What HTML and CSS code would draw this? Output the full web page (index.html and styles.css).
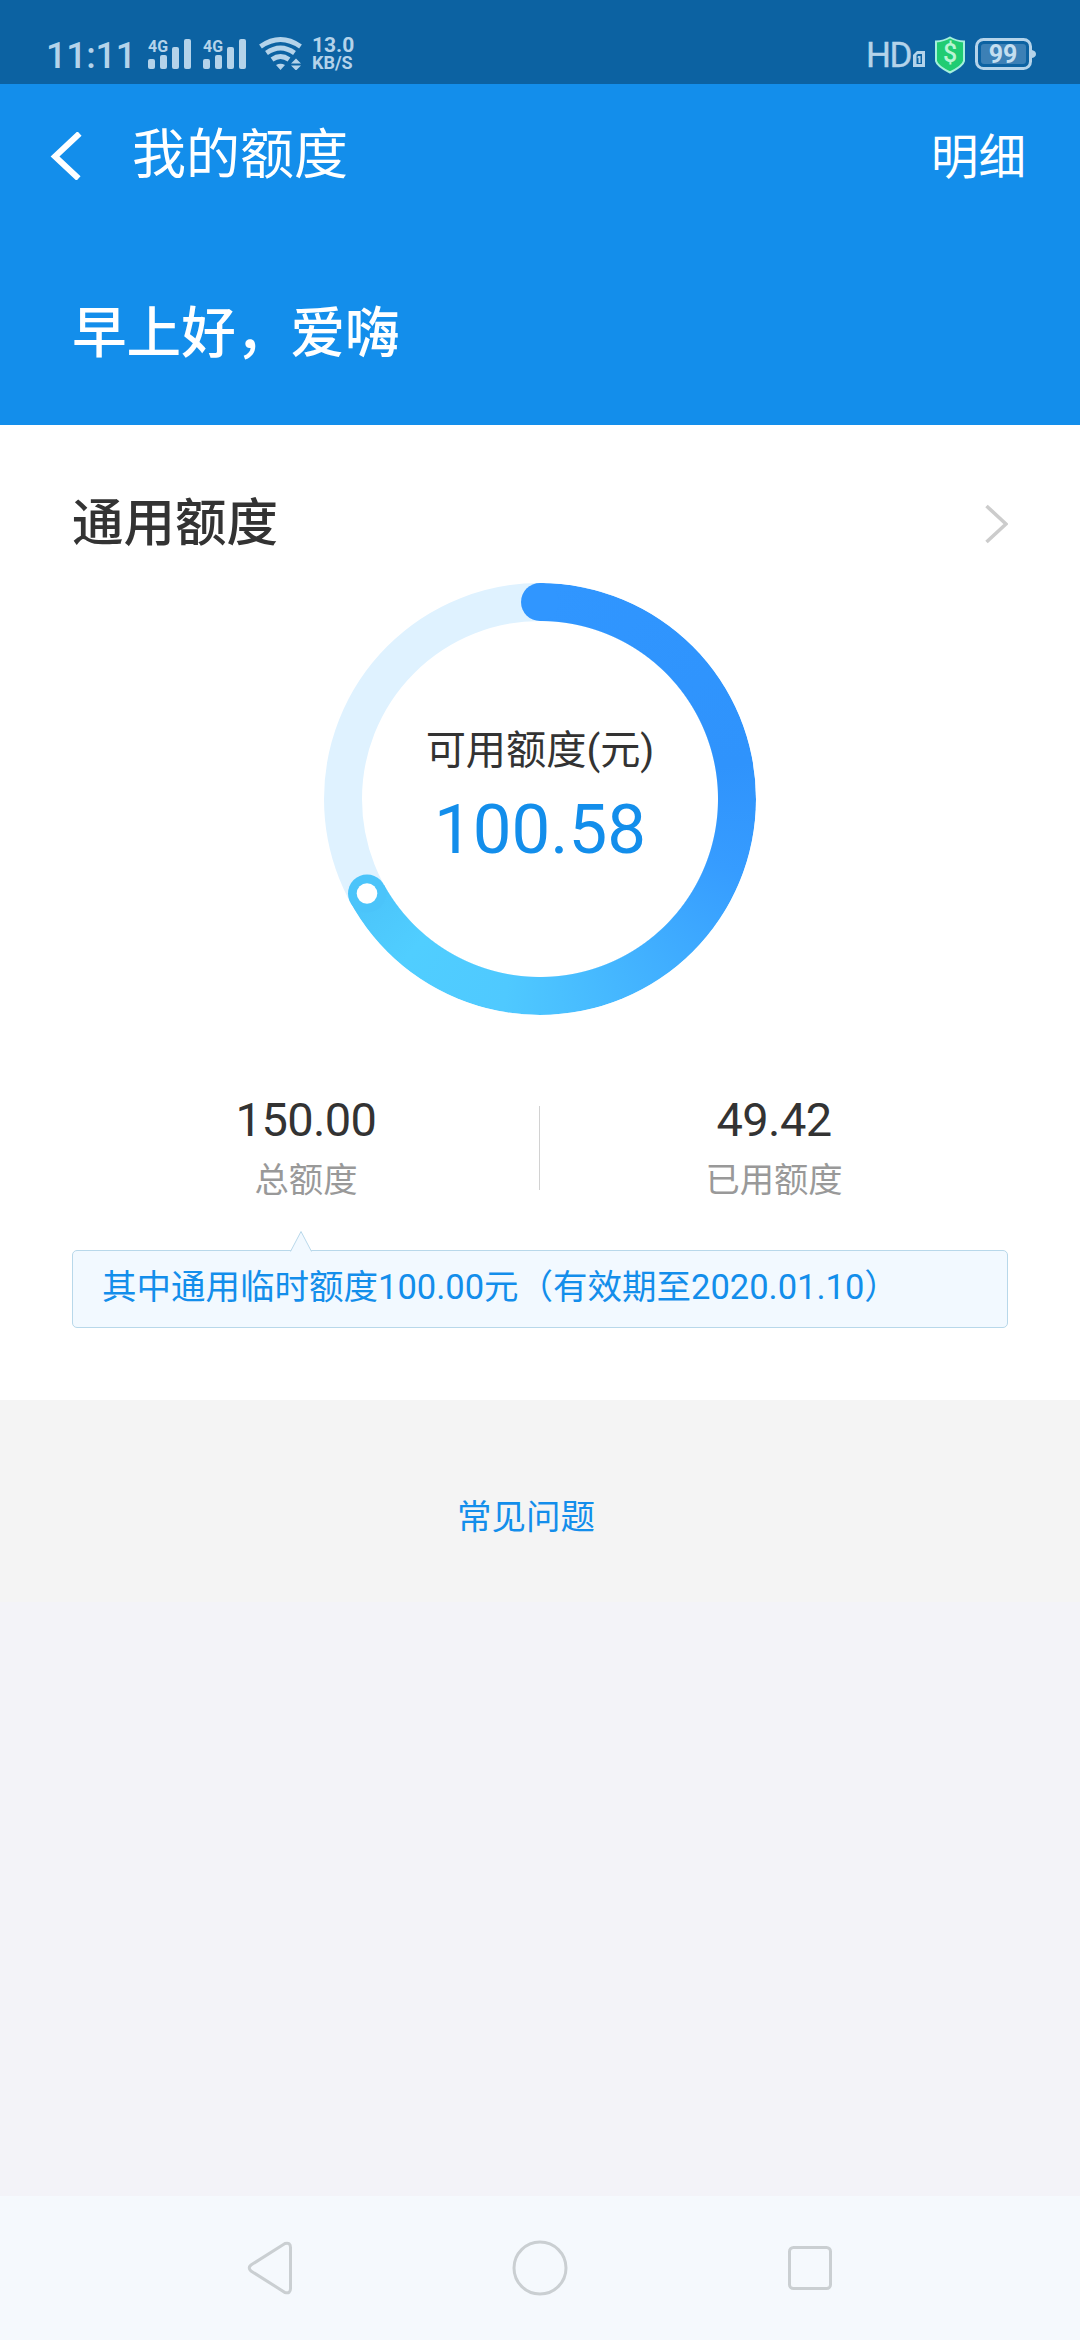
FILE: index.html
```html
<!DOCTYPE html>
<html lang="zh-CN">
<head>
<meta charset="utf-8">
<title>我的额度</title>
<link rel="stylesheet" href="styles.css">
</head>
<body>
<div class="phone">
  <div class="status">
    <span class="clock">11:11</span>
    <svg class="signal" width="44" height="34" viewBox="0 0 44 34"><g fill="currentColor"><rect y="23" width="7" height="10" rx="2"/><rect x="12" y="19" width="7" height="14" rx="2"/><rect x="24" y="11" width="7" height="22" rx="2"/><rect x="36" y="3" width="7" height="30" rx="2"/></g><text x="0" y="15.500" class="net" textLength="20" lengthAdjust="spacingAndGlyphs">4G</text></svg>
    <svg class="signal signal-second" width="44" height="34" viewBox="0 0 44 34"><g fill="currentColor"><rect y="23" width="7" height="10" rx="2"/><rect x="12" y="19" width="7" height="14" rx="2"/><rect x="24" y="11" width="7" height="22" rx="2"/><rect x="36" y="3" width="7" height="30" rx="2"/></g><text x="0" y="15.500" class="net" textLength="20" lengthAdjust="spacingAndGlyphs">4G</text></svg>
    <svg class="wifi" width="44" height="34" viewBox="0 0 44 34"><g fill="none" stroke="currentColor" stroke-width="4.800"><path d="M1.500 10.500Q21.500-3.500 41.500 10.500"/><path d="M7.500 17Q21.500 7 35.500 17"/><path d="M13 23.500Q21.500 17.500 30 23.500"/></g><path fill="currentColor" d="M17 29Q21.500 26.500 26 29L21.500 34ZM32 27.500l5-5 5 5ZM32 29.500h10l-5 5Z"/></svg>
    <div class="speed"><span class="rate">13.0</span><span class="unit">KB/S</span></div>
    <div class="status-right">
      <span class="hd">HD</span>
      <svg class="sim" width="12" height="16" viewBox="0 0 12 16"><path fill="currentColor" fill-rule="evenodd" d="M4 0h8v16H0V4ZM3.500 4v9h5.500V3H5Z"/><path fill="currentColor" d="M5 5h2.500v7H5.500V7H4.500Z"/></svg>
      <svg class="shield" width="32" height="38" viewBox="0 0 32 38"><path d="M16 1.500Q22 5 30 5.500V25Q29 30 16 36.500Q3 30 2 25V5.500Q10 5 16 1.500Z" fill="#20cc72" stroke="#a5f0dc" stroke-width="2"/><text x="16" y="26" text-anchor="middle" class="dollar">$</text></svg>
      <svg class="battery" width="61" height="34" viewBox="0 0 61 34"><rect x="1.500" y="3.500" width="54" height="29" rx="7" fill="none" stroke="currentColor" stroke-width="3"/><rect x="6" y="8" width="45" height="20" rx="3" fill="#3c80b6"/><path d="M57 14q4 1 4 4t-4 4Z" fill="currentColor"/><text x="28" y="26.500" text-anchor="middle" class="level">99</text></svg>
    </div>
  </div>

  <header class="header">
    <div class="navbar">
      <svg class="back" width="34" height="48" viewBox="0 0 34 48"><path d="M30.500 1.500L6 24.500L29.500 46.500" fill="none" stroke="#fff" stroke-width="6"/></svg>
      <h1 class="title">我的额度</h1>
      <a class="detail">明细</a>
    </div>
    <p class="greeting">早上好，爱嗨</p>
  </header>

  <main class="card">
    <div class="card-head">
      <h2 class="card-title">通用额度</h2>
      <svg width="24" height="40" viewBox="0 0 24 40"><path d="M2.500 2L22 20L2.500 38" fill="none" stroke="#ccc" stroke-width="3.600"/></svg>
    </div>
    <div class="ring">
      <svg class="ring-track" width="432" height="432" viewBox="0 0 432 432"><circle cx="216" cy="216" r="197" fill="none" stroke="#dff2ff" stroke-width="38"/></svg>
      <div class="ring-arc"></div>
      <svg class="ring-caps" width="432" height="432" viewBox="0 0 432 432"><circle cx="216" cy="19" r="19" fill="#3096ff"/><circle cx="43" cy="310.500" r="19" fill="#4bc4fa"/><circle cx="43" cy="310.500" r="10.300" fill="#fff"/></svg>
      <div class="ring-text"><span class="ring-label">可用额度(元)</span><span class="ring-value">100.58</span></div>
    </div>
    <div class="stats">
      <div class="stat"><span class="num">150.00</span><span class="name">总额度</span></div>
      <div class="divider"></div>
      <div class="stat"><span class="num">49.42</span><span class="name">已用额度</span></div>
    </div>
    <div class="tip">
      <svg class="tip-arrow" width="24" height="22" viewBox="0 0 24 22"><path d="M1.500 21.500L12 1.500L22.500 21.500" fill="#f2f9ff" stroke="#b8d8ea"/></svg>
      其中通用临时额度100.00元（有效期至2020.01.10）
    </div>
  </main>
  <section class="faq"><a>常见问题</a></section>
  <div class="space"></div>
  <nav class="keys">
    <svg width="48" height="56" viewBox="0 0 48 56"><path d="M39 3.500L5 25Q1.500 28 5 31L39 52.500Q44.500 54 44.500 48.500V7.500Q44.500 2 39 3.500Z"/></svg>
    <svg width="56" height="56" viewBox="0 0 56 56"><circle cx="28" cy="28" r="26"/></svg>
    <svg width="48" height="56" viewBox="0 0 48 56"><rect x="3.500" y="7.500" width="41" height="41" rx="4"/></svg>
  </nav>
</div>
</body>
</html>
```
FILE: styles.css
```css
* { box-sizing: border-box; margin: 0; }
body { font-family: Roboto, "Noto Sans CJK SC", sans-serif; font-weight: 400; }
svg { display: block; flex: none; }
span, a, h1, h2, p { white-space: nowrap; }
.phone { width: 1080px; height: 2340px; display: flex; flex-direction: column; background: #f3f3f8; }

.status { height: 84px; padding: 36px 44px 0 46px; display: flex; align-items: flex-start; background: #0c62a2; color: #b4d3ea; }
.clock { width: 102px; font-size: 36px; line-height: 40px; font-weight: 500; letter-spacing: -0.3px; }
.signal { color: #b4d3ea; }
.signal-second { margin-left: 11px; }
.net { font-size: 17px; font-weight: 700; fill: currentColor; }
.wifi { margin-left: 12px; }
.speed { display: flex; flex-direction: column; margin-left: 9px; font-weight: 700; }
.rate { font-size: 21px; line-height: 19px; }
.unit { font-size: 18px; line-height: 16px; }
.status-right { display: flex; margin-left: auto; }
.hd { font-size: 35px; line-height: 39px; letter-spacing: -1.5px; -webkit-text-stroke: 0.4px currentColor; }
.sim { margin: 15px 9px 0 2px; }
.shield { margin-right: 9px; }
.dollar { font-size: 25px; font-weight: 500; fill: #b9f5d4; }
.level { font-size: 25px; font-weight: 700; fill: #c4def0; }

.header { height: 341px; background: #138eeb; color: #fff; }
.navbar { height: 144px; padding: 0 54px 0 49px; display: flex; align-items: center; }
.title { margin-left: 49px; font-size: 54px; line-height: 80px; font-weight: 400; }
.detail { margin: 3px 0 0 auto; font-size: 47.500px; line-height: 70px; }
.greeting { padding: 65px 72px 0; font-size: 54.600px; line-height: 80px; font-weight: 500; }

.card { height: 975px; padding: 59px 72px 0; background: #fff; color: #333; }
.card-head { height: 80px; display: flex; align-items: center; justify-content: space-between; }
.card-title { font-size: 51.500px; line-height: 80px; font-weight: 500; }
.ring { width: 432px; height: 432px; margin: 19px auto 0; display: grid; }
.ring > * { grid-area: 1 / 1; }
.ring-arc {
  border-radius: 50%;
  background: conic-gradient(#3096ff 0deg, #2f93fc 80deg, #369cff 110deg, #4fc9ff 190deg, #50ceff 220deg, #4bc4fa 241.3deg, transparent 241.3deg);
  -webkit-mask: radial-gradient(circle, transparent 177.500px, #000 178.500px);
  mask: radial-gradient(circle, transparent 177.500px, #000 178.500px);
}
.ring-caps { z-index: 1; }
.ring-text { display: flex; flex-direction: column; align-items: center; padding-top: 138px; }
.ring-label { font-size: 40.200px; line-height: 60px; }
.ring-value { margin-top: 3px; font-size: 69px; line-height: 92px; color: #138eeb; }
.stats { display: grid; grid-template-columns: 467px 1px 467px; margin-top: 75px; }
.stat { display: flex; flex-direction: column; align-items: center; padding-left: 1px; }
.num { font-size: 47px; line-height: 60px; letter-spacing: -0.6px; }
.name { font-size: 34.300px; line-height: 60px; color: #999; }
.divider { height: 84px; margin-top: 16px; background: #d2d2d2; }
.tip { position: relative; height: 78px; margin-top: 40px; padding-left: 29px; border: 1px solid #b8d8ea; border-radius: 5px; background: #f2f9ff; color: #138eeb; font-size: 34.500px; line-height: 72px; white-space: nowrap; }
.tip-arrow { position: absolute; left: 216px; top: -21px; }

.faq { height: 202px; padding: 91px 28px 0 0; background: #f4f4f4; text-align: center; }
.faq a { color: #138eeb; font-size: 34.500px; line-height: 52px; }
.space { flex: 1; }
.keys { height: 144px; padding: 0 246px; display: flex; align-items: center; justify-content: space-between; background: #f5f9fd; }
.keys path, .keys circle, .keys rect { fill: none; stroke: #cacfd2; stroke-width: 3; }
```
